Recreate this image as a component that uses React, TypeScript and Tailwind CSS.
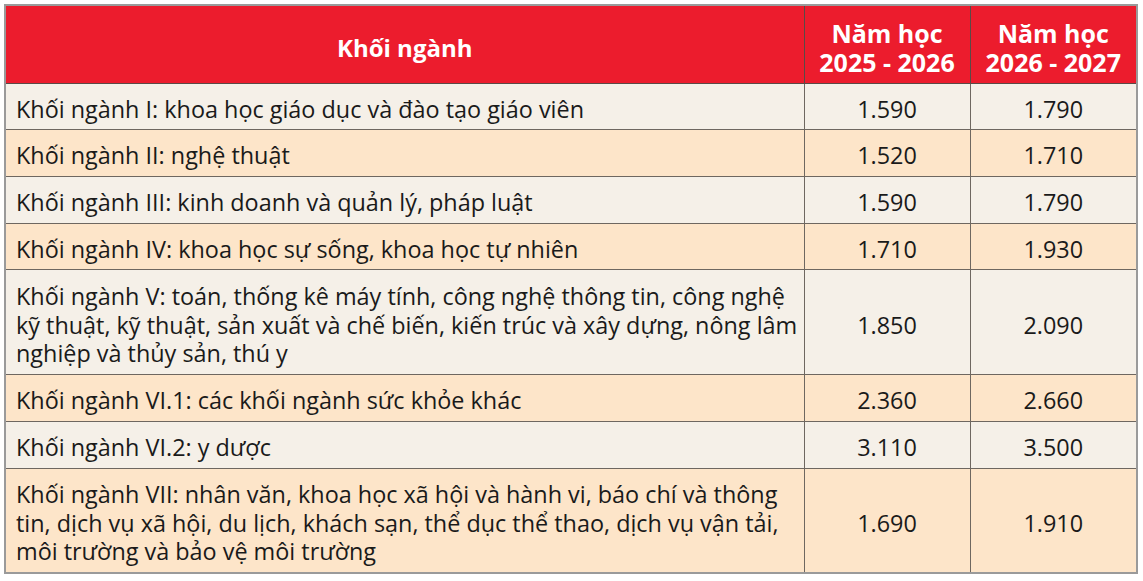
import React from 'react';

type Row = { name: string; y1: string; y2: string; tall?: boolean };

const rows: Row[] = [
  { name: 'Khối ngành I: khoa học giáo dục và đào tạo giáo viên', y1: '1.590', y2: '1.790' },
  { name: 'Khối ngành II: nghệ thuật', y1: '1.520', y2: '1.710' },
  { name: 'Khối ngành III: kinh doanh và quản lý, pháp luật', y1: '1.590', y2: '1.790' },
  { name: 'Khối ngành IV: khoa học sự sống, khoa học tự nhiên', y1: '1.710', y2: '1.930' },
  {
    name: 'Khối ngành V: toán, thống kê máy tính, công nghệ thông tin, công nghệ kỹ thuật, kỹ thuật, sản xuất và chế biến, kiến trúc và xây dựng, nông lâm nghiệp và thủy sản, thú y',
    y1: '1.850',
    y2: '2.090',
    tall: true,
  },
  { name: 'Khối ngành VI.1: các khối ngành sức khỏe khác', y1: '2.360', y2: '2.660' },
  { name: 'Khối ngành VI.2: y dược', y1: '3.110', y2: '3.500' },
  {
    name: 'Khối ngành VII: nhân văn, khoa học xã hội và hành vi, báo chí và thông tin, dịch vụ xã hội, du lịch, khách sạn, thể dục thể thao, dịch vụ vận tải, môi trường và bảo vệ môi trường',
    y1: '1.690',
    y2: '1.910',
    tall: true,
  },
];

export default function App() {
  return (
    <div className="w-[1143px] h-[581px] bg-white pt-[4px] pl-[4px] font-['Open_Sans',sans-serif]">
      <table className="w-[1132px] border-collapse border-2 border-[#9a9a9a] table-fixed">
        <colgroup>
          <col className="w-[799px]" />
          <col className="w-[166px]" />
          <col className="w-[167px]" />
        </colgroup>
        <thead>
          <tr className="bg-[#ec1c2d] text-white font-bold h-[78px]">
            <th className="border border-[#5a4a46] text-[24px] leading-[30px] pt-[7px] pb-0 px-0">Khối ngành</th>
            <th className="border border-[#5a4a46] text-[25px] leading-[29px] pt-[7px] pb-0 px-0">
              <div className="w-[150px] mx-auto">Năm học 2025 - 2026</div>
            </th>
            <th className="border border-[#5a4a46] text-[25px] leading-[29px] pt-[7px] pb-0 px-0">
              <div className="w-[150px] mx-auto">Năm học 2026 - 2027</div>
            </th>
          </tr>
        </thead>
        <tbody className="text-[#1a1a1a] text-[23.4px] leading-[28.5px]">
          {rows.map((r, i) => (
            <tr key={i} className={`${i % 2 === 0 ? 'bg-[#f5f0e8]' : 'bg-[#fde5c9]'} ${r.tall ? 'h-[105px]' : 'h-[46.7px]'}`}>
              <td className="border border-[#6e6760] pl-[10px] pr-[4px] pt-[5px] pb-0 align-middle">{r.name}</td>
              <td className="border border-[#6e6760] pt-[5px] pb-0 px-0 text-center align-middle">{r.y1}</td>
              <td className="border border-[#6e6760] pt-[5px] pb-0 px-0 text-center align-middle">{r.y2}</td>
            </tr>
          ))}
        </tbody>
      </table>
    </div>
  );
}
